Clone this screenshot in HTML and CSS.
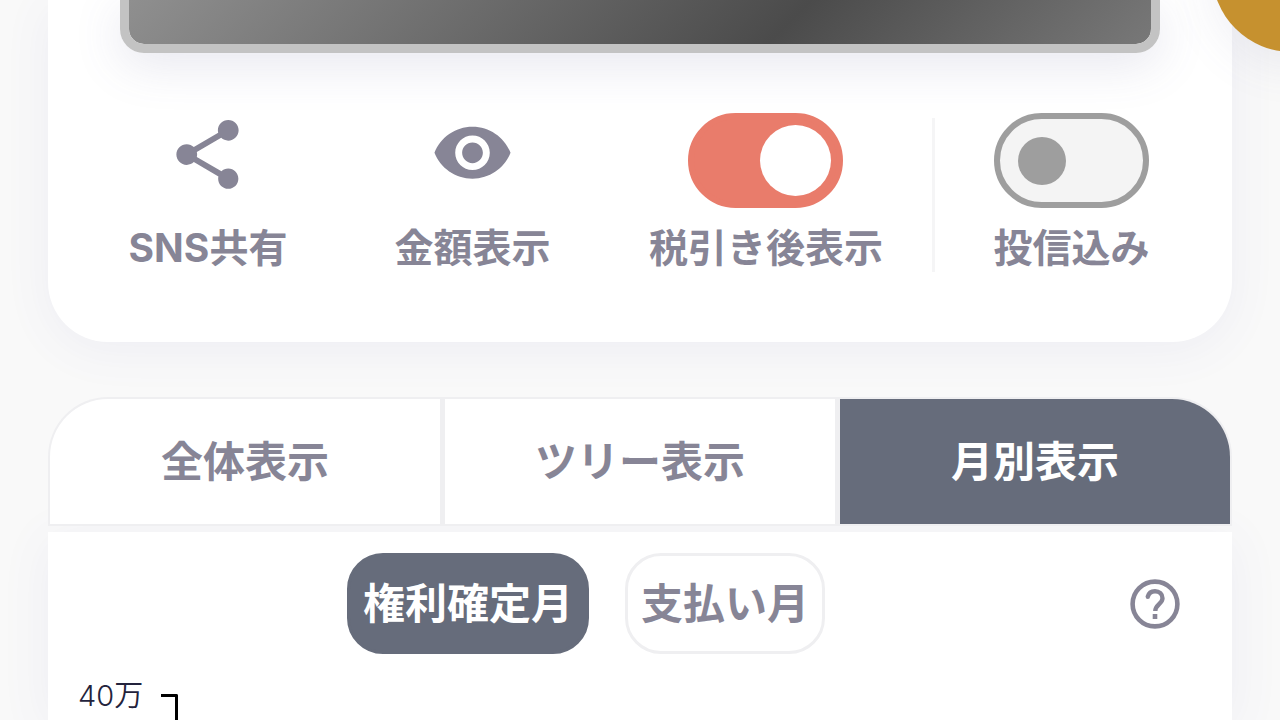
FILE: index.html
```html
<!DOCTYPE html>
<html lang="ja">
<head>
<meta charset="utf-8">
<meta name="viewport" content="width=device-width, initial-scale=1">
<title>配当金 月別表示</title>
<link rel="stylesheet" href="styles.css">
</head>
<body>
<main class="page">
  <section class="summary">
    <div class="banner"></div>
    <div class="actions">
      <button class="action" type="button">
        <span class="action-icon">
          <svg class="icon" viewBox="0 0 24 24" aria-hidden="true"><path d="M18 16.08c-.76 0-1.44.3-1.96.77L8.91 12.7c.05-.23.09-.46.09-.7s-.04-.47-.09-.7l7.05-4.11c.54.5 1.25.81 2.04.81 1.66 0 3-1.34 3-3s-1.34-3-3-3-3 1.34-3 3c0 .24.04.47.09.7L8.04 9.81C7.5 9.31 6.79 9 6 9c-1.66 0-3 1.34-3 3s1.34 3 3 3c.79 0 1.5-.31 2.04-.81l7.12 4.16c-.05.21-.08.43-.08.65 0 1.61 1.31 2.92 2.92 2.92s2.92-1.31 2.92-2.92-1.31-2.92-2.92-2.92z"/></svg>
        </span>
        <span class="action-label">SNS共有</span>
      </button>
      <button class="action" type="button">
        <span class="action-icon">
          <svg class="icon" viewBox="0 0 24 24" aria-hidden="true"><path d="M12 4C7 4 2.73 7.11 1 11.5 2.73 15.89 7 19 12 19s9.27-3.11 11-7.5C21.27 7.11 17 4 12 4zm0 12.5c-2.76 0-5-2.24-5-5s2.24-5 5-5 5 2.24 5 5-2.24 5-5 5zm0-8c-1.66 0-3 1.34-3 3s1.34 3 3 3 3-1.34 3-3-1.34-3-3-3z"/></svg>
        </span>
        <span class="action-label">金額表示</span>
      </button>
      <label class="action">
        <input class="switch" type="checkbox" role="switch" checked>
        <span class="action-label">税引き後表示</span>
      </label>
      <span class="divider"></span>
      <label class="action">
        <input class="switch" type="checkbox" role="switch">
        <span class="action-label">投信込み</span>
      </label>
    </div>
  </section>

  <nav class="tabs">
    <button class="tab" type="button">全体表示</button>
    <button class="tab" type="button">ツリー表示</button>
    <button class="tab tab-active" type="button">月別表示</button>
  </nav>

  <section class="panel">
    <div class="toolbar">
      <div class="pills">
        <button class="pill pill-active" type="button">権利確定月</button>
        <button class="pill" type="button">支払い月</button>
      </div>
      <button class="help" type="button" aria-label="ヘルプ">
        <svg class="help-icon" viewBox="0 0 50 50" aria-hidden="true">
          <circle cx="25" cy="25" r="22.4" fill="none" stroke="currentColor" stroke-width="4.6"/>
          <path d="M17.8 17.8C18.6 14.2 21.4 12.2 25 12.2c4.3 0 7.5 3 7.5 7 0 5.6-7.2 6.4-7.2 12.8" fill="none" stroke="currentColor" stroke-width="4.4"/>
          <circle cx="17.8" cy="17.8" r="2.2"/>
          <rect x="22.7" y="35" width="4.6" height="5"/>
        </svg>
      </button>
    </div>
    <div class="chart">
      <span class="axis-label">40万</span>
      <span class="axis"></span>
    </div>
  </section>
  <button class="fab" type="button" aria-label="メニュー"></button>
</main>
</body>
</html>
```

FILE: styles.css
```css
* { box-sizing: border-box; }

:root {
  --ink: #878596;
  --slate: #666c7b;
  --line: #efeff1;
  --soft-shadow: 0 8px 48px rgba(90, 90, 170, 0.07);
}

body {
  margin: 0;
  background: #f9f9f9;
  color: var(--ink);
  font-family: Inter, "Noto Sans CJK JP", sans-serif;
  font-weight: 700;
}

button {
  margin: 0;
  padding: 0;
  border: 0;
  background: none;
  color: inherit;
  font: inherit;
  cursor: pointer;
}

.page {
  position: relative;
  display: flex;
  flex-direction: column;
  height: 100vh;
  padding: 0 48px;
  overflow: hidden;
}

.fab {
  position: absolute;
  top: -108px;
  right: -92px;
  width: 160px;
  height: 160px;
  border-radius: 50%;
  background: #c6912f;
  box-shadow: 0 12px 48px rgba(96, 96, 150, 0.1);
}

.summary {
  padding: 0 72px 70px;
  border-radius: 0 0 60px 60px;
  background: #fff;
  box-shadow: var(--soft-shadow);
}

.banner {
  height: 53px;
  border: 9px solid #c3c3c3;
  border-top: 0;
  border-radius: 0 0 24px 24px;
  background: linear-gradient(135deg, #8f8f8f, #4b4b4b 64%, #787878) padding-box;
  box-shadow: 0 12px 48px rgba(96, 96, 150, 0.15);
}

.actions {
  display: grid;
  grid-template-columns: 176fr 353fr 234fr 100fr 177fr;
  justify-items: center;
  margin-top: 60px;
}

.action {
  display: flex;
  flex-direction: column;
  align-items: center;
  gap: 16px;
  cursor: pointer;
}

.action-icon { height: 95px; }

.icon {
  display: block;
  width: 83px;
  height: 83px;
  fill: currentColor;
}

.action-label {
  font-size: 39px;
  line-height: 48px;
  white-space: nowrap;
}

.switch {
  appearance: none;
  display: flex;
  align-items: center;
  width: 155px;
  height: 95px;
  margin: 0;
  padding: 0 18px;
  border: 6px solid #9e9e9e;
  border-radius: 48px;
  background: #f4f4f4;
}

.switch::before {
  content: "";
  width: 48px;
  height: 48px;
  border-radius: 50%;
  background: #9e9e9e;
}

.switch:checked {
  justify-content: flex-end;
  padding: 0 6px;
  border-color: #e97c6b;
  background: #e97c6b;
}

.switch:checked::before {
  width: 71px;
  height: 71px;
  background: #fff;
}

.divider {
  width: 3px;
  margin: 5px 0 0;
  background: #f5f5f6;
}

.tabs {
  position: relative;
  z-index: 1;
  display: grid;
  grid-template-columns: repeat(3, 1fr);
  gap: 5px;
  margin-top: 55px;
  padding: 2px;
  border-radius: 60px 60px 0 0;
  background: var(--line);
}

.tab {
  height: 125px;
  background: #fff;
  font-size: 42px;
  line-height: 60px;
}

.tab:first-child { border-top-left-radius: 58px; }
.tab:last-child { border-top-right-radius: 58px; }

.tab-active {
  background: var(--slate);
  color: #fff;
}

.panel {
  flex: 1;
  display: flex;
  flex-direction: column;
  margin-top: 6px;
  padding-top: 21px;
  background: #fff;
  box-shadow: var(--soft-shadow);
}

.toolbar {
  display: flex;
  align-items: center;
  gap: 6px;
  padding-right: 52px;
}

.pills {
  flex: 1;
  display: flex;
  justify-content: center;
  gap: 36px;
}

.pill {
  height: 101px;
  padding: 0 13px;
  border: 3px solid var(--line);
  border-radius: 36px;
  background: #fff;
  font-size: 42px;
  line-height: 60px;
}

.pill-active {
  border-color: var(--slate);
  background: var(--slate);
  color: #fff;
}

.help,
.help-icon {
  display: block;
  width: 50px;
  height: 50px;
  fill: currentColor;
}

.chart {
  flex: 1;
  display: flex;
  gap: 18px;
  padding: 22px 0 0 30px;
}

.axis-label {
  color: #23233c;
  font-size: 29px;
  font-weight: 350;
  line-height: 40px;
}

.axis {
  width: 17px;
  margin-top: 18px;
  border-top: 3px solid #000;
  border-right: 3px solid #000;
  border-top-right-radius: 2px;
}
```
